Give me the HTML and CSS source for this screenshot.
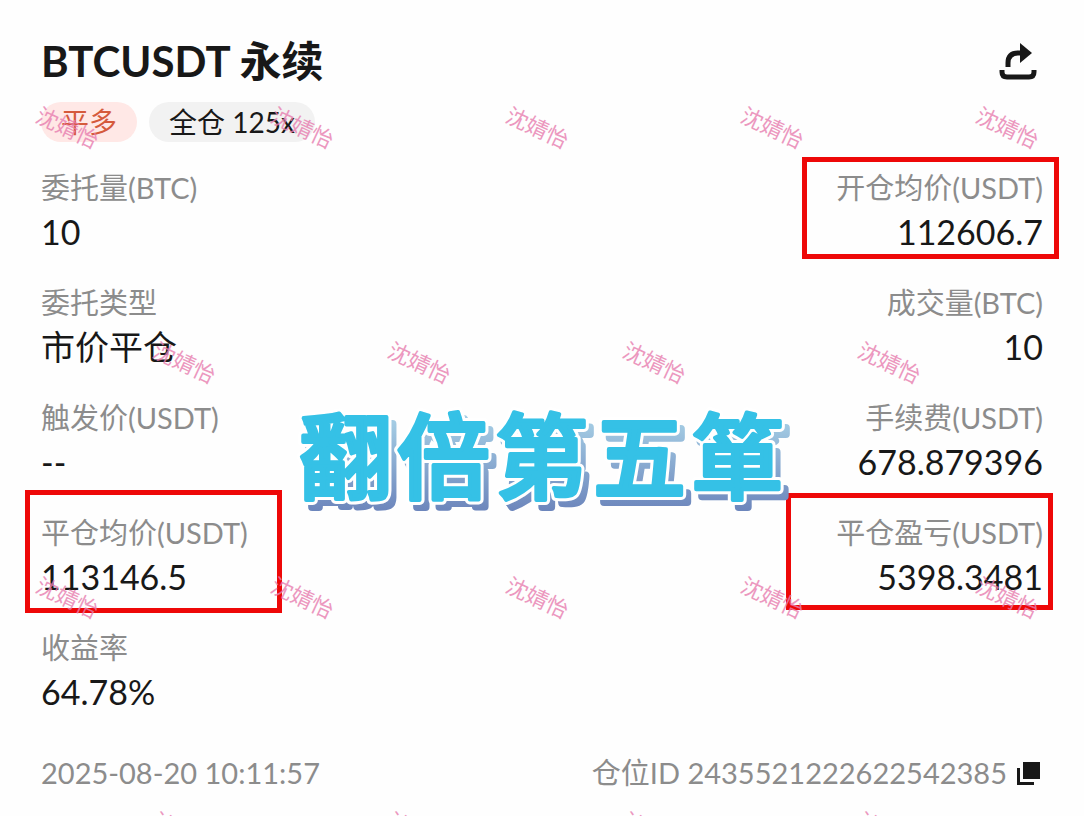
FILE: index.html
```html
<!DOCTYPE html>
<html lang="zh-CN">
<head>
<meta charset="utf-8">
<meta name="viewport" content="width=device-width, initial-scale=1">
<title>BTCUSDT 永续</title>
<link rel="stylesheet" href="styles.css">
</head>
<body>
<main class="order">
  <header class="head">
    <h1 class="title">BTCUSDT 永续</h1>
    <button class="icon-btn" type="button" aria-label="分享">
      <svg class="share" viewBox="0 0 38 38" aria-hidden="true">
        <path d="M9 25V21Q9 11 19 11H23" fill="none" stroke="currentColor" stroke-width="5"/>
        <path d="M21 1L33 11L21 21Z" fill="currentColor"/>
        <path d="M3 28V30Q3 35 8 35H30Q35 35 35 30V28" fill="none" stroke="currentColor" stroke-width="5"/>
      </svg>
    </button>
  </header>
  <div class="tags">
    <span class="tag tag-long">平多</span>
    <span class="tag">全仓 125x</span>
  </div>
  <dl class="fields">
    <div class="field"><dt>委托量(BTC)</dt><dd>10</dd></div>
    <div class="field end mark mark-open"><dt>开仓均价(USDT)</dt><dd>112606.7</dd></div>
    <div class="field"><dt>委托类型</dt><dd>市价平仓</dd></div>
    <div class="field end"><dt>成交量(BTC)</dt><dd>10</dd></div>
    <div class="field"><dt>触发价(USDT)</dt><dd>--</dd></div>
    <div class="field end"><dt>手续费(USDT)</dt><dd>678.879396</dd></div>
    <div class="field mark mark-close"><dt>平仓均价(USDT)</dt><dd>113146.5</dd></div>
    <div class="field end mark mark-profit"><dt>平仓盈亏(USDT)</dt><dd>5398.3481</dd></div>
    <div class="field"><dt>收益率</dt><dd>64.78%</dd></div>
  </dl>
  <footer class="foot">
    <time datetime="2025-08-20T10:11:57">2025-08-20 10:11:57</time>
    <div class="position">
      <span>仓位ID 2435521222622542385</span>
      <button class="icon-btn" type="button" aria-label="复制">
        <svg class="copy" viewBox="0 0 24 24" aria-hidden="true">
          <path d="M6 1H23V18H6Z" fill="currentColor"/>
          <path d="M0 7V24H17V21H3V7Z" fill="currentColor"/>
        </svg>
      </button>
    </div>
  </footer>
  <svg class="banner" viewBox="0 0 510 120" role="img" aria-label="翻倍第五箪">
    <defs>
      <linearGradient id="depth" gradientUnits="userSpaceOnUse" x1="0" y1="14" x2="0" y2="104">
        <stop offset="0" stop-color="#a3cbe3"/>
        <stop offset="1" stop-color="#6b84bb"/>
      </linearGradient>
      <text id="slogan" x="8 106 204 302 400" y="90">翻倍第五箪</text>
    </defs>
    <use class="banner-depth" href="#slogan" x="6" y="7"/>
    <use class="banner-edge" href="#slogan"/>
    <use class="banner-face" href="#slogan"/>
  </svg>
  <div class="watermark" aria-hidden="true">
    <div class="wm-row"><span>沈婧怡</span><span>沈婧怡</span><span>沈婧怡</span><span>沈婧怡</span><span>沈婧怡</span></div>
    <div class="wm-row shift"><span>沈婧怡</span><span>沈婧怡</span><span>沈婧怡</span><span>沈婧怡</span></div>
    <div class="wm-row"><span>沈婧怡</span><span>沈婧怡</span><span>沈婧怡</span><span>沈婧怡</span><span>沈婧怡</span></div>
    <div class="wm-row shift"><span>沈婧怡</span><span>沈婧怡</span><span>沈婧怡</span><span>沈婧怡</span></div>
  </div>
</main>
</body>
</html>
```
FILE: styles.css
```css
*, *::after { box-sizing: border-box; }

body {
  margin: 0;
  background: #fefefe;
  color: #181818;
  font-family: Lato, "Noto Sans CJK SC", sans-serif;
}

.order {
  position: relative;
  min-height: 100vh;
  padding: 31px 41px 23px;
  overflow: hidden;
}

.head {
  display: flex;
  align-items: center;
  justify-content: space-between;
}

.title {
  margin: 0;
  font-size: 42px;
  font-weight: 700;
  line-height: 60px;
}

.icon-btn {
  display: flex;
  padding: 0;
  border: 0;
  background: none;
  color: #181818;
}

.share { width: 38px; height: 38px; margin-right: 6px; }
.copy { width: 24px; height: 24px; margin-right: 2px; }

.tags {
  display: flex;
  gap: 12px;
  margin-top: 11px;
}

.tag {
  padding: 0 20px;
  border-radius: 20px;
  background: #f2f2f2;
  font-size: 28px;
  line-height: 40px;
}

.tag-long { background: #ffe8e6; color: #d55a3c; }

.fields {
  display: grid;
  grid-template-columns: auto auto;
  justify-content: space-between;
  row-gap: 27px;
  margin: 26px 0 0;
}

.field { position: relative; justify-self: start; }
.end { justify-self: end; text-align: right; }

dt {
  color: #8c8c8c;
  font-size: 29px;
  line-height: 40px;
}

dd {
  margin: 0;
  font-size: 34px;
  line-height: 48px;
}

.mark::after {
  content: "";
  position: absolute;
  width: 257px;
  border: 5px solid #ee0808;
}

.mark-open::after { top: -11px; right: -16px; bottom: -3px; }
.mark-close::after { top: -23px; left: -16px; bottom: -12px; }
.mark-profit::after { top: -20px; right: -10px; bottom: -9px; width: 267px; }

.foot {
  display: flex;
  justify-content: space-between;
  margin-top: 37px;
  color: #8c8c8c;
  font-size: 29px;
  line-height: 40px;
}

.position {
  display: flex;
  align-items: center;
  gap: 10px;
}

.banner {
  position: absolute;
  top: 402px;
  left: 50%;
  width: 510px;
  height: 120px;
  margin-left: -251px;
  font-family: "Noto Sans CJK JP", sans-serif;
  font-size: 93px;
  font-weight: 500;
  stroke-linejoin: round;
}

.banner-depth { fill: url(#depth); stroke: url(#depth); stroke-width: 8px; }
.banner-edge { fill: #fff; stroke: #fff; stroke-width: 10px; }
.banner-face { fill: #35c1e6; stroke: #35c1e6; stroke-width: 4px; }

.watermark {
  position: absolute;
  top: 10px;
  left: -50px;
  color: #e87fb0;
  font-size: 22px;
  pointer-events: none;
}

.wm-row { display: flex; }
.shift { padding-left: 117px; }

.wm-row span {
  width: 235px;
  line-height: 235px;
  text-align: center;
  transform: rotate(25deg);
  opacity: 0.8;
}
```
